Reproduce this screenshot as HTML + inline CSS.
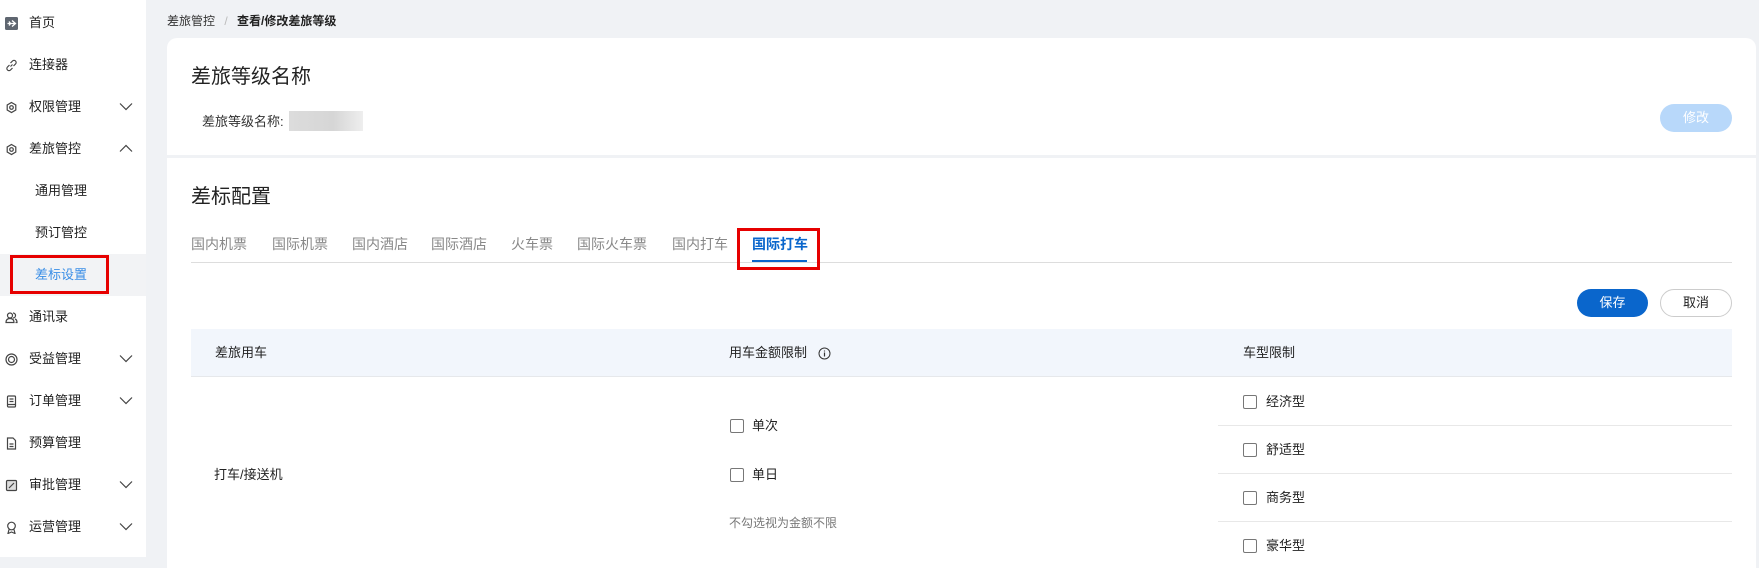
<!DOCTYPE html>
<html><head><meta charset="utf-8"><style>
*{margin:0;padding:0;box-sizing:border-box}
body{width:1759px;height:557px;overflow:hidden;background:#f0f2f5;font-family:"Liberation Sans","Noto Sans CJK SC",sans-serif;color:#222;position:relative}
.a{position:absolute;white-space:nowrap}
.side{position:absolute;left:0;top:0;width:146px;height:557px;background:#fff}
.mi{position:absolute;left:0;width:146px;height:42px;font-size:13px;line-height:42px;color:#222}
.mi .t{position:absolute;left:29px}
.mi svg.ic{position:absolute;left:5px;top:15px}
.mi .ch{position:absolute;left:119px;top:16px}
.sub .t{left:35px}
.card{position:absolute;left:167px;top:38px;width:1589px;height:530px;background:#fff;border-radius:10px 10px 0 0}
.tab{position:absolute;top:234px;font-size:14px;color:#888;line-height:20px}
.cb{position:absolute;width:14px;height:14px;border:1px solid #777;border-radius:2px;background:#fff}
.hl{position:absolute;height:1px;background:#e8e8e8}
</style></head><body>
<div class="side">
  <div class="mi" style="top:2px"><svg class="ic" width="13" height="13" viewBox="0 0 13 13"><rect width="13" height="13" rx="1.5" fill="#5f6670"/><path d="M2.5 6.5h8M7 3.5l3.5 3L7 9.5M4 4.5l1.5 2-1.5 2" stroke="#fff" stroke-width="1.3" fill="none"/></svg><span class="t">首页</span></div>
  <div class="mi" style="top:44px"><svg class="ic" width="13" height="13" viewBox="0 0 13 13" fill="none" stroke="#444" stroke-width="1.2"><path d="M5.5 7.5l2-2M4.5 6l-2 2a2 2 0 003 3l2-2M8.5 7l2-2a2 2 0 00-3-3l-2 2"/></svg><span class="t">连接器</span></div>
  <div class="mi" style="top:86px"><svg class="ic" width="13" height="13" viewBox="0 0 13 13" fill="none" stroke="#444" stroke-width="1.2"><path d="M6.5 1.5l4.3 2.5v5L6.5 11.5 2.2 9V4z"/><circle cx="6.5" cy="6.5" r="1.8"/></svg><span class="t">权限管理</span><svg class="ch" width="14" height="9" viewBox="0 0 14 9"><path d="M1 1.5l6 6 6-6" stroke="#444" stroke-width="1.2" fill="none"/></svg></div>
  <div class="mi" style="top:128px"><svg class="ic" width="13" height="13" viewBox="0 0 13 13" fill="none" stroke="#444" stroke-width="1.2"><path d="M6.5 1.5l4.3 2.5v5L6.5 11.5 2.2 9V4z"/><circle cx="6.5" cy="6.5" r="1.8"/></svg><span class="t">差旅管控</span><svg class="ch" width="14" height="9" viewBox="0 0 14 9"><path d="M1 7.5l6-6 6 6" stroke="#444" stroke-width="1.2" fill="none"/></svg></div>
  <div class="mi sub" style="top:170px"><span class="t">通用管理</span></div>
  <div class="mi sub" style="top:212px"><span class="t">预订管控</span></div>
  <div class="mi sub" style="top:254px;background:#f2f3f5;color:#3a8ee6"><span class="t">差标设置</span></div>
  <div class="mi" style="top:296px"><svg class="ic" width="13" height="13" viewBox="0 0 13 13" fill="none" stroke="#444" stroke-width="1.2"><circle cx="5" cy="4.5" r="2.5"/><path d="M1 11.5c0-3 1.5-4 4-4s4 1 4 4zM8 2a2.5 2.5 0 010 5M10 8c1.5.5 2 1.5 2 3.5h-1.5"/></svg><span class="t">通讯录</span></div>
  <div class="mi" style="top:338px"><svg class="ic" width="13" height="13" viewBox="0 0 13 13" fill="none" stroke="#444" stroke-width="1.2"><circle cx="6.5" cy="6.5" r="5.5"/><circle cx="6.5" cy="6.5" r="3"/></svg><span class="t">受益管理</span><svg class="ch" width="14" height="9" viewBox="0 0 14 9"><path d="M1 1.5l6 6 6-6" stroke="#444" stroke-width="1.2" fill="none"/></svg></div>
  <div class="mi" style="top:380px"><svg class="ic" width="13" height="13" viewBox="0 0 13 13" fill="none" stroke="#444" stroke-width="1.2"><rect x="2.5" y="1" width="8" height="11" rx="1"/><path d="M4.5 4h4M4.5 6.5h4M2.5 9.5h8"/></svg><span class="t">订单管理</span><svg class="ch" width="14" height="9" viewBox="0 0 14 9"><path d="M1 1.5l6 6 6-6" stroke="#444" stroke-width="1.2" fill="none"/></svg></div>
  <div class="mi" style="top:422px"><svg class="ic" width="13" height="13" viewBox="0 0 13 13" fill="none" stroke="#444" stroke-width="1.2"><path d="M2.5 1h5.5l2.5 2.5V12h-8z"/><path d="M4.5 7h4M4.5 9.5h4"/></svg><span class="t">预算管理</span></div>
  <div class="mi" style="top:464px"><svg class="ic" width="13" height="13" viewBox="0 0 13 13" fill="none" stroke="#444" stroke-width="1.2"><rect x="1.5" y="1.5" width="10" height="10" rx="1" fill="#ddd"/><path d="M4 9l5-5"/></svg><span class="t">审批管理</span><svg class="ch" width="14" height="9" viewBox="0 0 14 9"><path d="M1 1.5l6 6 6-6" stroke="#444" stroke-width="1.2" fill="none"/></svg></div>
  <div class="mi" style="top:506px"><svg class="ic" width="13" height="13" viewBox="0 0 13 13" fill="none" stroke="#444" stroke-width="1.2"><circle cx="6.5" cy="5" r="3.8"/><path d="M4 8.5l-1 4 3.5-1.5 3.5 1.5-1-4"/></svg><span class="t">运营管理</span><svg class="ch" width="14" height="9" viewBox="0 0 14 9"><path d="M1 1.5l6 6 6-6" stroke="#444" stroke-width="1.2" fill="none"/></svg></div>
</div>
<div class="a" style="left:10px;top:255px;width:99px;height:39px;border:3px solid #e60000"></div>

<div class="a" style="left:167px;top:13px;font-size:12px;line-height:16px;color:#333">差旅管控 <span style="color:#bbb;margin:0 6px">/</span> <b style="color:#222">查看/修改差旅等级</b></div>

<div class="card"></div>
<div class="a" style="left:191px;top:64px;font-size:20px;line-height:26px;color:#222">差旅等级名称</div>
<div class="a" style="left:202px;top:113px;font-size:13px;line-height:18px;color:#333">差旅等级名称:</div>
<div class="a" style="left:289px;top:111px;width:74px;height:20px;background:linear-gradient(90deg,#dcdcdc,#d6d6d6 60%,#eeeeee)"></div>
<div class="a" style="left:1660px;top:104px;width:72px;height:28px;border-radius:14px;background:#b8d8fa;color:#fff;font-size:13px;line-height:28px;text-align:center">修改</div>
<div class="a" style="left:167px;top:155px;width:1589px;height:3px;background:#f0f2f5"></div>

<div class="a" style="left:191px;top:184px;font-size:20px;line-height:26px;color:#222">差标配置</div>
<div class="tab" style="left:191px">国内机票</div>
<div class="tab" style="left:272px">国际机票</div>
<div class="tab" style="left:352px">国内酒店</div>
<div class="tab" style="left:431px">国际酒店</div>
<div class="tab" style="left:511px">火车票</div>
<div class="tab" style="left:577px">国际火车票</div>
<div class="tab" style="left:672px">国内打车</div>
<div class="tab" style="left:752px;color:#0a66cc;font-weight:bold">国际打车</div>
<div class="hl" style="left:191px;top:262px;width:1541px;background:#ddd"></div>
<div class="a" style="left:752px;top:260px;width:55px;height:2px;background:#0a66cc"></div>
<div class="a" style="left:737px;top:228px;width:83px;height:42px;border:3px solid #e60000"></div>

<div class="a" style="left:1577px;top:289px;width:71px;height:28px;border-radius:14px;background:#0a66cc;color:#fff;font-size:13px;line-height:28px;text-align:center">保存</div>
<div class="a" style="left:1660px;top:289px;width:72px;height:28px;border-radius:14px;border:1px solid #ccc;color:#222;font-size:13px;line-height:26px;text-align:center">取消</div>

<div class="a" style="left:191px;top:329px;width:1541px;height:48px;background:#f2f6fc;border-bottom:1px solid #e6e8eb"></div>
<div class="a" style="left:215px;top:344px;font-size:13px;line-height:18px">差旅用车</div>
<div class="a" style="left:729px;top:344px;font-size:13px;line-height:18px">用车金额限制</div>
<svg class="a" style="left:818px;top:347px" width="13" height="13" viewBox="0 0 13 13"><circle cx="6.5" cy="6.5" r="5.5" stroke="#333" fill="none"/><path d="M6.5 5.5v4M6.5 3.5v1" stroke="#333" stroke-width="1.2"/></svg>
<div class="a" style="left:1243px;top:344px;font-size:13px;line-height:18px">车型限制</div>

<div class="a" style="left:214px;top:466px;font-size:13px;line-height:18px">打车/接送机</div>
<div class="cb" style="left:730px;top:419px"></div><div class="a" style="left:752px;top:417px;font-size:13px;line-height:18px">单次</div>
<div class="cb" style="left:730px;top:468px"></div><div class="a" style="left:752px;top:466px;font-size:13px;line-height:18px">单日</div>
<div class="a" style="left:729px;top:514px;font-size:12px;line-height:18px;color:#777">不勾选视为金额不限</div>

<div class="cb" style="left:1243px;top:395px"></div><div class="a" style="left:1266px;top:393px;font-size:13px;line-height:18px">经济型</div>
<div class="hl" style="left:1218px;top:425px;width:514px"></div>
<div class="cb" style="left:1243px;top:443px"></div><div class="a" style="left:1266px;top:441px;font-size:13px;line-height:18px">舒适型</div>
<div class="hl" style="left:1218px;top:473px;width:514px"></div>
<div class="cb" style="left:1243px;top:491px"></div><div class="a" style="left:1266px;top:489px;font-size:13px;line-height:18px">商务型</div>
<div class="hl" style="left:1218px;top:521px;width:514px"></div>
<div class="cb" style="left:1243px;top:539px"></div><div class="a" style="left:1266px;top:537px;font-size:13px;line-height:18px">豪华型</div>
</body></html>
